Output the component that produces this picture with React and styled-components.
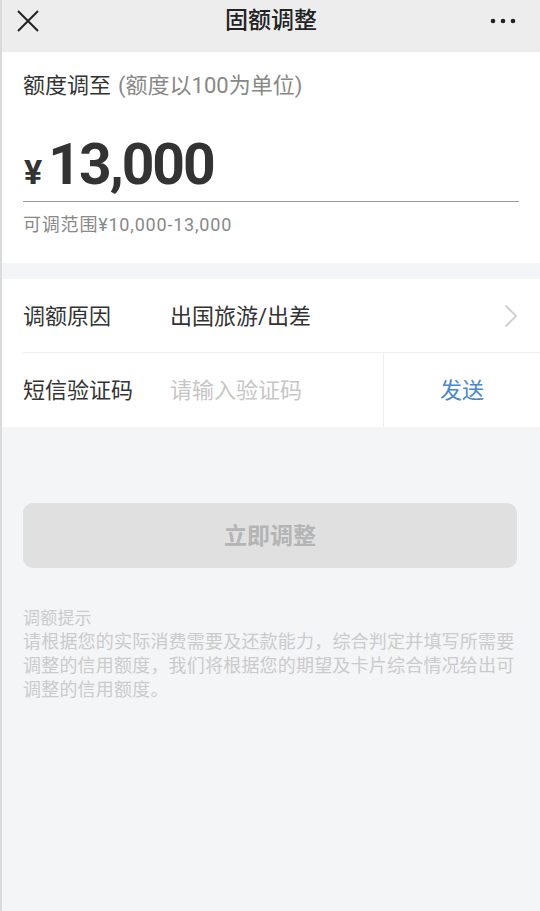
import React from "react";
import styled, { createGlobalStyle } from "styled-components";

const Global = createGlobalStyle`
  html, body { margin: 0; padding: 0; background: #f4f5f7; }
  body { font-family: Roboto, "Noto Sans CJK SC", sans-serif; color: #333; }
  * { box-sizing: border-box; }
`;

const Page = styled.div`
  width: 540px;
  min-height: 911px;
  background: #f4f5f7;
  border-left: 2px solid #dadada;
  display: flex;
  flex-direction: column;
`;

const Header = styled.header`
  height: 52px;
  background: #ededed;
  display: flex;
  align-items: center;
  justify-content: space-between;
  padding: 0 24px 0 15px;
  position: relative;
`;

const Title = styled.h1`
  position: absolute;
  left: 0;
  right: 0;
  top: 0;
  margin: 0;
  line-height: 42px;
  text-align: center;
  font-size: 23px;
  font-weight: 500;
  color: #222;
  pointer-events: none;
`;

const IconBtn = styled.div`
  display: flex;
  align-items: center;
  height: 42px;
  align-self: flex-start;
`;

const Card = styled.section`
  background: #fff;
  padding: ${(p) => p.$pad || "0"};
  margin-bottom: ${(p) => p.$mb || "0"};
`;

const Caption = styled.div`
  font-size: 22px;
  line-height: 28px;
  color: #333;
`;

const CaptionNote = styled.span`
  color: #888;
  margin-left: 7px;
`;

const AmountRow = styled.div`
  margin-top: 35px;
  padding-bottom: 6px;
  border-bottom: 1px solid #9a9a9a;
  display: flex;
  align-items: baseline;
  height: 67px;
`;

const Yen = styled.span`
  font-size: 34px;
  font-weight: 700;
  color: #333;
  line-height: 60px;
  margin-left: 1px;
  margin-right: 6px;
`;

const Amount = styled.span`
  font-size: 57px;
  font-weight: 700;
  color: #333;
  line-height: 60px;
  letter-spacing: -2px;
`;

const Range = styled.div`
  margin-top: 11px;
  font-size: 18px;
  line-height: 24px;
  color: #888;
  letter-spacing: 0.8px;
`;

const Row = styled.div`
  margin-left: 21px;
  height: ${(p) => p.$h}px;
  padding-bottom: 4px;
  display: flex;
  align-items: center;
  border-bottom: ${(p) => (p.$divider ? "1px solid #eeeeee" : "none")};
`;

const Label = styled.div`
  width: 147px;
  flex-shrink: 0;
  font-size: 22px;
  color: #333;
`;

const Value = styled.div`
  flex: 1;
  font-size: 22px;
  color: ${(p) => (p.$placeholder ? "#c6c6c6" : "#333")};
`;

const Chevron = styled.div`
  width: 36px;
  display: flex;
  justify-content: flex-start;
  align-items: center;
  padding-top: 4px;
`;

const SendCell = styled.div`
  width: 157px;
  align-self: stretch;
  margin-bottom: -4px;
  padding-bottom: 4px;
  border-left: 1px solid #eeeeee;
  display: flex;
  align-items: center;
  justify-content: center;
  font-size: 22px;
  color: #4a86c8;
`;

const Actions = styled.div`
  padding: 76px 21px 0 21px;
`;

const Button = styled.button`
  width: 494px;
  height: 65px;
  padding: 0 0 4px;
  border: none;
  border-radius: 10px;
  background: #e0e0e0;
  color: #b4b4b4;
  font-family: inherit;
  font-size: 23px;
  font-weight: 700;
`;

const Tips = styled.div`
  margin-top: 38px;
  width: 496px;
  font-size: 18px;
  line-height: 24px;
  color: #cbcbcb;
  letter-spacing: 0.2px;
`;

const TipTitle = styled.div`
  font-size: 17px;
`;

export default function App() {
  return (
    <>
      <Global />
      <Page>
        <Header>
          <IconBtn>
            <svg width="22" height="22" viewBox="0 0 22 22">
              <path d="M1 1 L21 21 M21 1 L1 21" stroke="#222" strokeWidth="2" fill="none" />
            </svg>
          </IconBtn>
          <Title>固额调整</Title>
          <IconBtn>
            <svg width="26" height="6" viewBox="0 0 26 6">
              <circle cx="3" cy="3" r="2.3" fill="#222" />
              <circle cx="13" cy="3" r="2.3" fill="#222" />
              <circle cx="23" cy="3" r="2.3" fill="#222" />
            </svg>
          </IconBtn>
        </Header>

        <Card $pad="20px 21px 26px 21px" $mb="16px">
          <Caption>
            额度调至<CaptionNote>(额度以100为单位)</CaptionNote>
          </Caption>
          <AmountRow>
            <Yen>¥</Yen>
            <Amount>13,000</Amount>
          </AmountRow>
          <Range>可调范围¥10,000-13,000</Range>
        </Card>

        <Card>
          <Row $h={74} $divider>
            <Label>调额原因</Label>
            <Value>出国旅游/出差</Value>
            <Chevron>
              <svg width="14" height="24" viewBox="0 0 14 24">
                <path d="M1.5 1.5 L12 12 L1.5 22.5" stroke="#c8c8c8" strokeWidth="1.6" fill="none" />
              </svg>
            </Chevron>
          </Row>
          <Row $h={74}>
            <Label>短信验证码</Label>
            <Value $placeholder>请输入验证码</Value>
            <SendCell>发送</SendCell>
          </Row>
        </Card>

        <Actions>
          <Button>立即调整</Button>
          <Tips>
            <TipTitle>调额提示</TipTitle>
            请根据您的实际消费需要及还款能力，综合判定并填写所需要调整的信用额度，我们将根据您的期望及卡片综合情况给出可调整的信用额度。
          </Tips>
        </Actions>
      </Page>
    </>
  );
}
